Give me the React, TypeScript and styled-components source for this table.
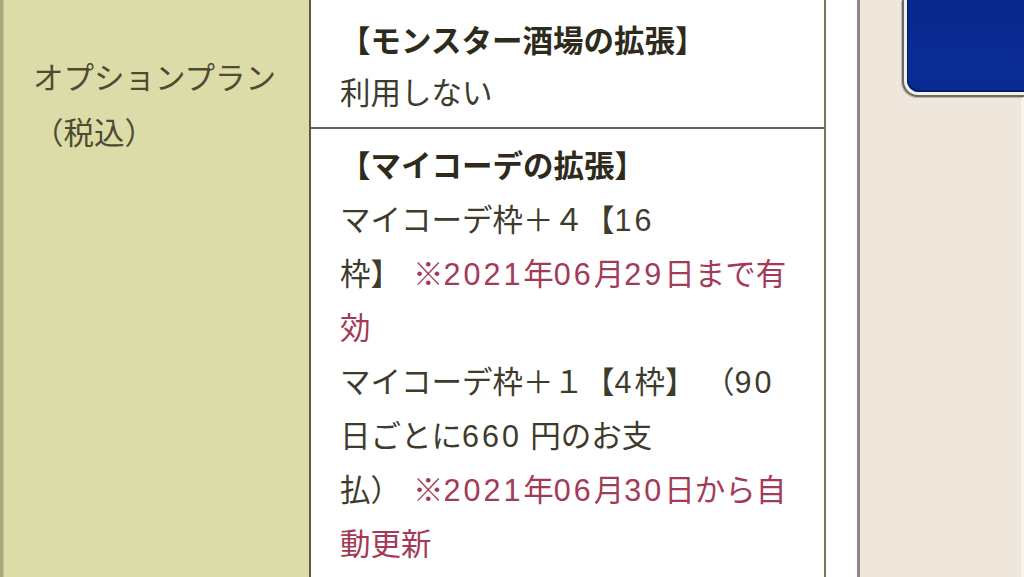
import React from "react";
import styled, { createGlobalStyle } from "styled-components";

const GlobalStyle = createGlobalStyle`
  html, body {
    margin: 0;
    padding: 0;
    background: #ffffff;
  }
  body {
    font-family: "Liberation Sans", "Noto Sans CJK JP", sans-serif;
  }
`;

const Page = styled.div`
  display: flex;
  width: 1024px;
  height: 577px;
  overflow: hidden;
  background: #ffffff;
`;

const Table = styled.div`
  display: flex;
  flex: none;
  margin-right: 31px;
  height: 100%;
`;

const HeaderCell = styled.div`
  flex: none;
  width: 276px;
  padding: 51px 0 0 30px;
  background: #dcdca8;
  border-left: 3px solid #aaa77c;
  box-shadow: inset 1px 0 0 #c6c492;
  color: #4e4b30;
  font-size: 30.5px;
  line-height: 55px;
  white-space: nowrap;
`;

const BodyColumn = styled.div`
  flex: none;
  width: 513px;
  display: flex;
  flex-direction: column;
  border-left: 2px solid #5c5a40;
  border-right: 2px solid #76745c;
`;

const Row = styled.div<{ $lh: number; $pt: number; $h?: number }>`
  flex: none;
  ${(p) => (p.$h ? `height: ${p.$h}px;` : "")}
  box-sizing: border-box;
  padding: ${(p) => p.$pt}px 0 0 29px;
  font-size: 30.5px;
  line-height: ${(p) => p.$lh}px;
  color: #3d3b2c;
  white-space: nowrap;

  & + & {
    border-top: 2px solid #64624a;
  }
`;

const Heading = styled.span`
  font-weight: 700;
  color: #2f2b1c;
`;

const Note = styled.span`
  margin-left: 12px;
  color: #a33a58;
`;

const Num = styled.span`
  letter-spacing: 3px;
`;

const SidePanel = styled.div`
  flex: 1;
  height: 100%;
  background: #efe7db;
  border-left: 3px solid #8d8b89;
  box-shadow: inset -3px 0 0 #f8f4ee;
`;

const BadgeFrame = styled.div`
  margin-left: 42px;
  height: 97px;
  box-sizing: border-box;
  border-left: 2px solid #6c6a68;
  border-bottom: 2px solid #6c6a68;
  border-bottom-left-radius: 16px;
  box-shadow: -1px 1px 0 #b9b4ac;
  background: #f3efe9;
  padding: 0 0 3px 3px;
`;

const BadgeInner = styled.div`
  height: 100%;
  border-bottom-left-radius: 12px;
  background: linear-gradient(180deg, #08278a 0%, #0b2c96 70%, #0a2a92 100%);
  box-shadow: inset 1px -2px 0 #021c6c;
`;

export default function App() {
  return (
    <>
      <GlobalStyle />
      <Page>
        <Table>
          <HeaderCell>
            オプションプラン
            <br />
            （税込）
          </HeaderCell>
          <BodyColumn>
            <Row $lh={52} $pt={15} $h={127}>
              <Heading>【モンスター酒場の拡張】</Heading>
              <br />
              利用しない
            </Row>
            <Row $lh={54} $pt={10}>
              <Heading>【マイコーデの拡張】</Heading>
              <br />
              マイコーデ枠＋４【<Num>16</Num>
              <br />
              枠】
              <Note>
                ※<Num>2021</Num>年<Num>06</Num>月<Num>29</Num>日まで有
                <br />
                効
              </Note>
              <br />
              マイコーデ枠＋１【<Num>4</Num>枠】 （<Num>90</Num>
              <br />
              日ごとに<Num>660</Num> 円のお支
              <br />
              払）
              <Note>
                ※<Num>2021</Num>年<Num>06</Num>月<Num>30</Num>日から自
                <br />
                動更新
              </Note>
            </Row>
          </BodyColumn>
        </Table>
        <SidePanel>
          <BadgeFrame>
            <BadgeInner />
          </BadgeFrame>
        </SidePanel>
      </Page>
    </>
  );
}
